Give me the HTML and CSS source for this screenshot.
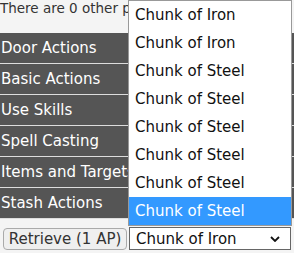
FILE: index.html
```html
<!DOCTYPE html>
<html lang="en">
<head>
    <meta charset="UTF-8">
    <meta name="viewport" content="width=device-width, initial-scale=1.0">
    <title>Location</title>
    <link rel="stylesheet" href="styles.css">
</head>
<body>

    <p class="info">There are 0 other players here.</p>

    <div class="actions">
        <div class="section">Door Actions</div>
        <div class="section">Basic Actions</div>
        <div class="section">Use Skills</div>
        <div class="section">Spell Casting</div>
        <div class="section">Items and Targets</div>
        <div class="section">Stash Actions</div>
    </div>

    <form class="retrieve">
        <button type="button" class="retrieve-btn">Retrieve (1 AP)</button>
        <div class="select">
            <span>Chunk of Iron</span>
            <svg class="chevron" width="10" height="6" viewBox="0 0 10 6"><path d="M1 1 L5 5 L9 1" fill="none" stroke="#111" stroke-width="1.8"/></svg>
        </div>
    </form>

    <!-- open dropdown of the stash select -->
    <ul class="dropdown">
        <li>Chunk of Iron</li>
        <li>Chunk of Iron</li>
        <li>Chunk of Steel</li>
        <li>Chunk of Steel</li>
        <li>Chunk of Steel</li>
        <li>Chunk of Steel</li>
        <li>Chunk of Steel</li>
        <li class="selected">Chunk of Steel</li>
    </ul>

</body>
</html>
```

FILE: styles.css
```css
body {
    margin: 0;
    font-family: "DejaVu Sans", Verdana, sans-serif;
    background-color: #f4f4f4;
    color: #333;
    position: relative;
    overflow: hidden;
}
.info {
    margin: 0;
    padding-top: 1px;
    font-size: 13.5px;
    line-height: 15px;
    height: 32px;
    white-space: nowrap;
}
.actions {
    display: flex;
    flex-direction: column;
    width: 294px;
}
.section {
    background-color: #555;
    color: white;
    font-size: 15px;
    height: 30px;
    line-height: 30px;
    padding-left: 1px;
    border-bottom: 1px solid #ddd;
    white-space: nowrap;
    overflow: hidden;
}
.retrieve {
    display: flex;
    align-items: center;
    gap: 2px;
    padding: 8px 0 0 3px;
}
.retrieve-btn {
    font-family: inherit;
    font-size: 15px;
    color: #333;
    background-color: #efefef;
    border: 1px solid #aaa;
    border-radius: 4px;
    height: 22px;
    width: 124px;
    padding: 0;
}
.select {
    display: flex;
    align-items: center;
    justify-content: space-between;
    width: 162px;
    height: 23px;
    box-sizing: border-box;
    border: 1px solid #666;
    background-color: white;
    color: #111;
    font-size: 15px;
    padding: 0 10px 0 6px;
}
.dropdown {
    position: absolute;
    left: 128px;
    top: 0;
    width: 164px;
    margin: 0;
    padding: 0;
    list-style-type: none;
    background-color: white;
    border: 1px solid #999;
    box-sizing: border-box;
}
.dropdown li {
    height: 28px;
    line-height: 28px;
    padding-left: 6px;
    font-size: 15px;
    color: #111;
}
.dropdown li.selected {
    background-color: #3399ff;
    color: white;
}
```
